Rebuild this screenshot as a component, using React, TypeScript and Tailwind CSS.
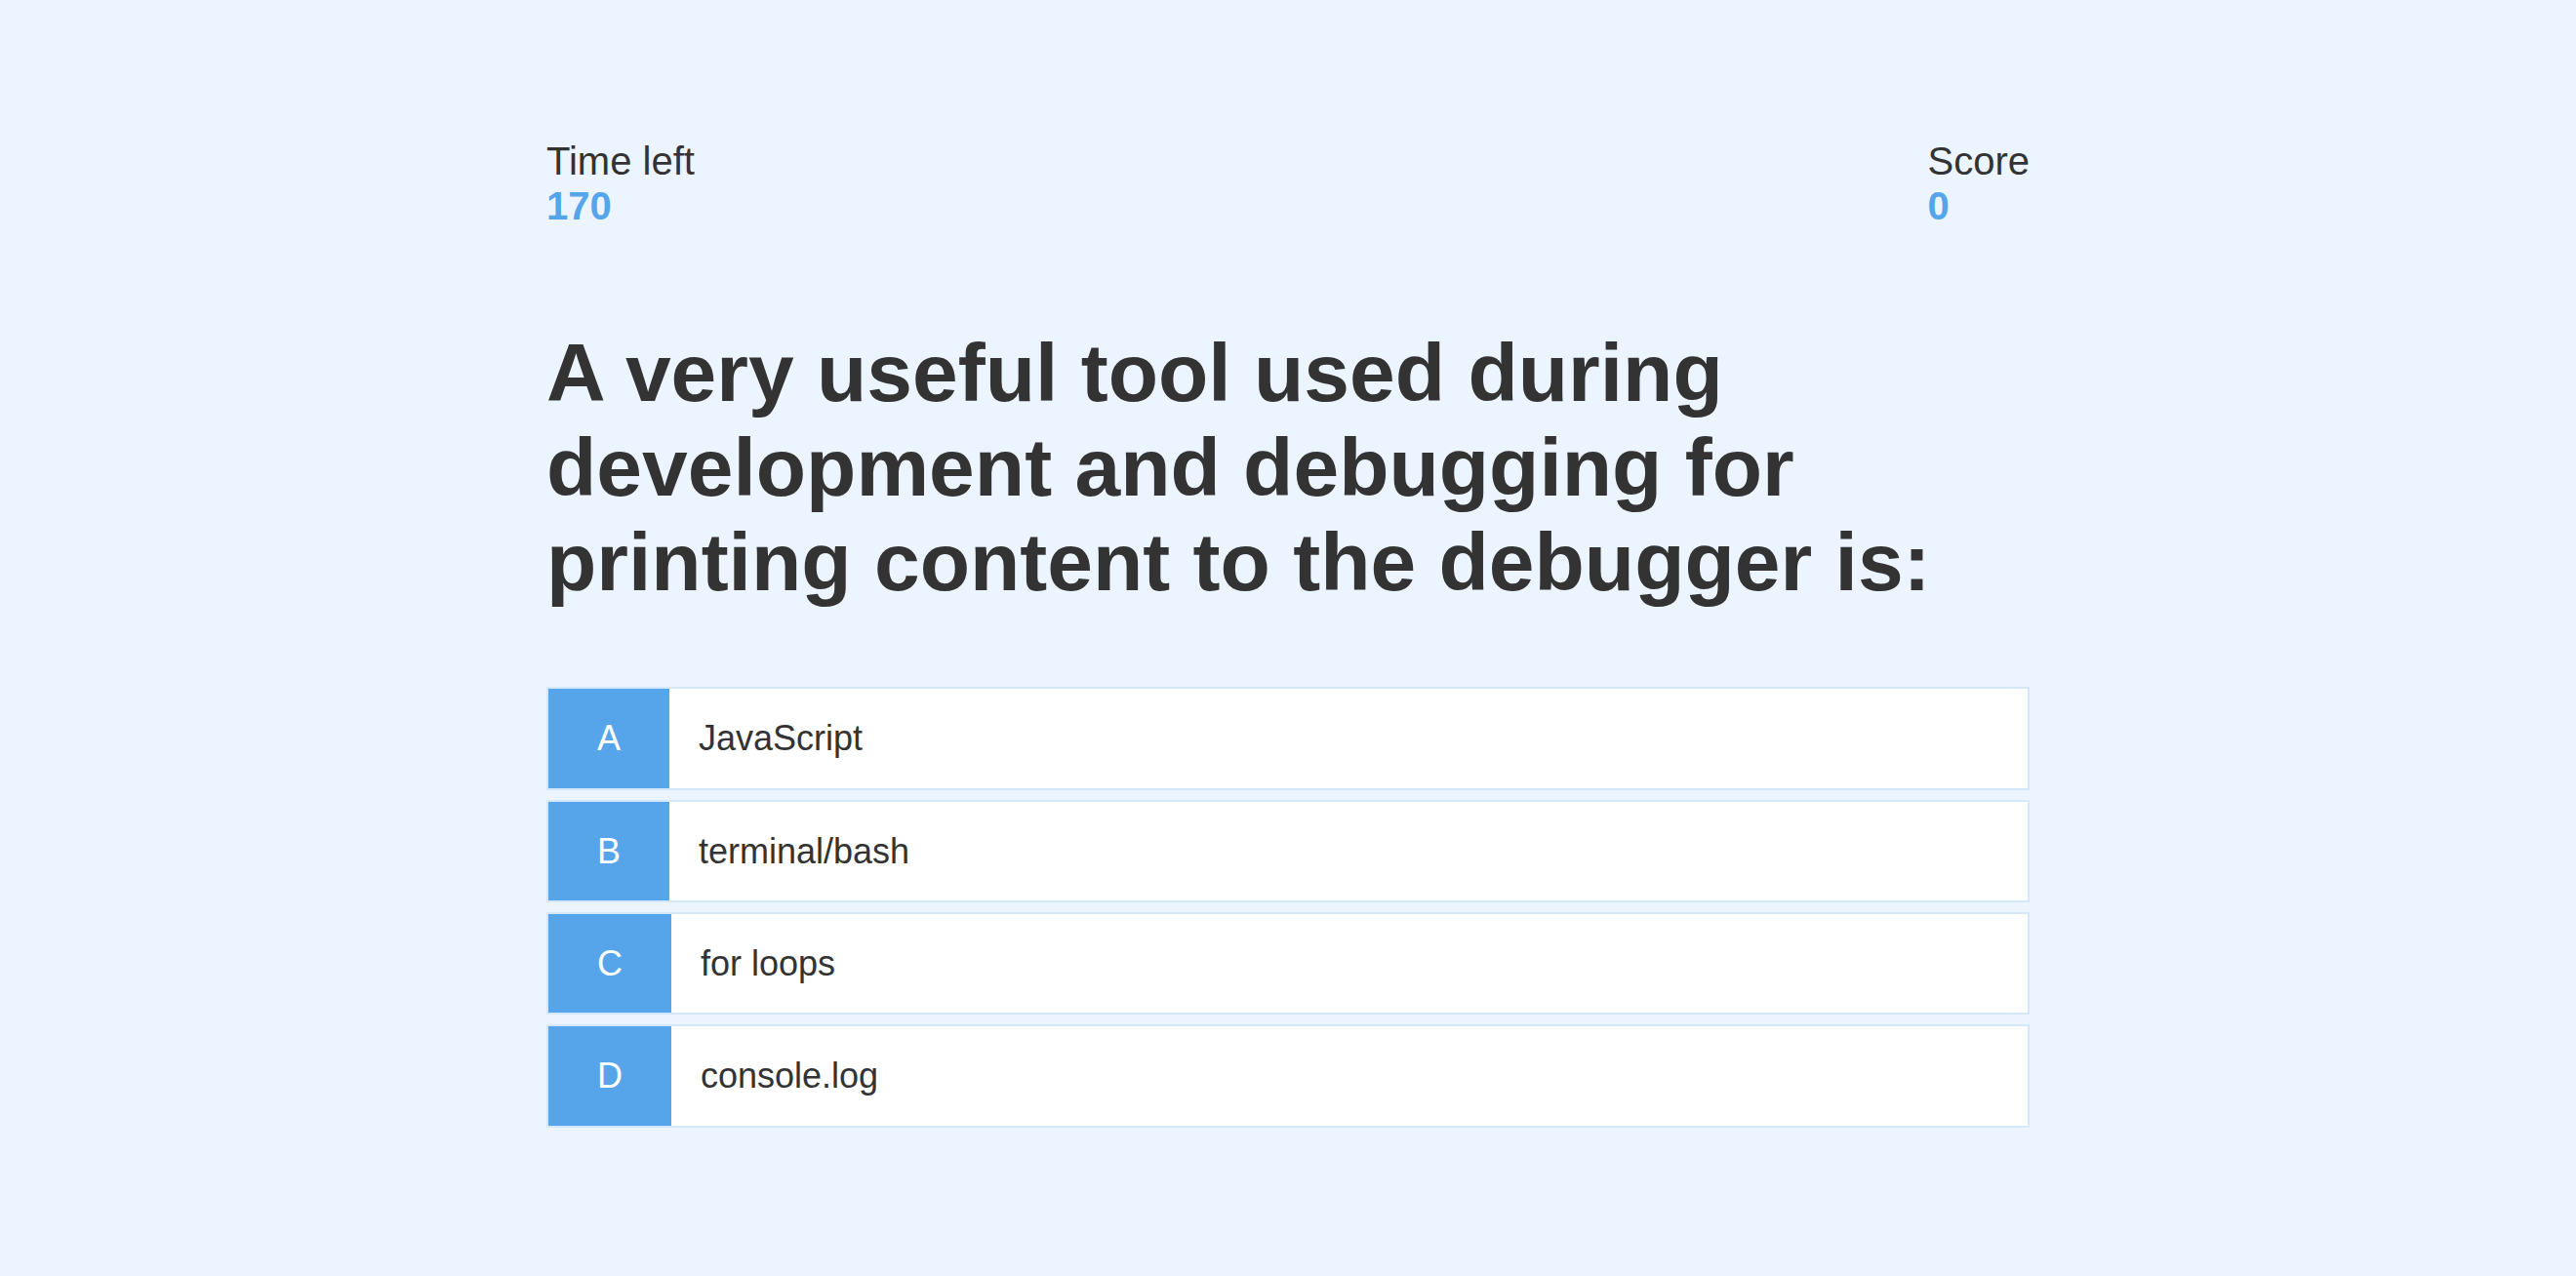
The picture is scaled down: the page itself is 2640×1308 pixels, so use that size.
const choices = [
  { prefix: 'A', text: 'JavaScript' },
  { prefix: 'B', text: 'terminal/bash' },
  { prefix: 'C', text: 'for loops' },
  { prefix: 'D', text: 'console.log' },
];

function Choice({ prefix, text }: { prefix: string; text: string }) {
  return (
    <div className="flex w-full mb-[10px] text-[36px] leading-[1.15] bg-white border-2 border-[rgba(86,165,235,0.25)] cursor-pointer">
      <p className="px-[50px] py-[30px] bg-[#56a5eb] text-white">{prefix}</p>
      <p className="p-[30px] w-full text-[#333]">{text}</p>
    </div>
  );
}

export default function App() {
  return (
    <div
      className="min-h-screen w-full bg-[#ecf5ff] text-[#333]"
      style={{ fontFamily: '"Liberation Sans", Arial, sans-serif' }}
    >
      <div className="mx-auto h-screen max-w-[1600px] p-[40px] flex flex-col justify-center">
        <div className="flex justify-between mb-[100px]">
          <div>
            <p className="text-[40px] leading-[1.15]">Time left</p>
            <p className="text-[40px] leading-[1.15] font-bold text-[#56a5eb]">170</p>
          </div>
          <div>
            <p className="text-[40px] leading-[1.15]">Score</p>
            <p className="text-[40px] leading-[1.15] font-bold text-[#56a5eb]">0</p>
          </div>
        </div>
        <h2 className="text-[84px] leading-[1.15] font-bold mb-[80px]">
          A very useful tool used during development and debugging for printing content to the debugger is:
        </h2>
        {choices.map((c) => (
          <Choice key={c.prefix} prefix={c.prefix} text={c.text} />
        ))}
      </div>
    </div>
  );
}
